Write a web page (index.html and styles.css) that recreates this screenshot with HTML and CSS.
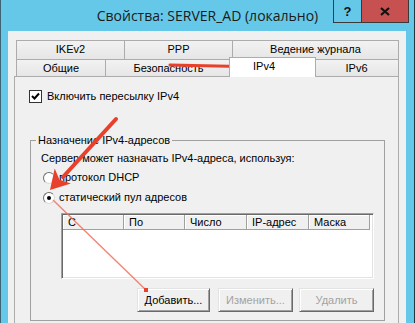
FILE: index.html
```html
<!DOCTYPE html>
<html lang="ru">
<head>
    <meta charset="UTF-8">
    <title>Свойства: SERVER_AD (локально)</title>
    <link rel="stylesheet" href="styles.css">
</head>
<body>
    <div class="screen">
        <div class="window">
            <div class="titlebar">
                <span></span>
                <div class="title">Свойства: SERVER_AD (локально)</div>
                <div class="caption-buttons">
                    <span class="cap-btn help">?</span>
                    <span class="cap-btn close">
                        <svg width="10" height="9" viewBox="0 0 10 9"><path d="M1 1 L9 8 M9 1 L1 8" stroke="#111" stroke-width="2.2" fill="none"/></svg>
                    </span>
                </div>
            </div>

            <div class="client">
                <div class="tabs">
                    <div class="tab-row row-top">
                        <div class="tab">IKEv2</div>
                        <div class="tab">PPP</div>
                        <div class="tab last">Ведение журнала</div>
                    </div>
                    <div class="tab-row row-bottom">
                        <div class="tab">Общие</div>
                        <div class="tab">Безопасность</div>
                        <div class="tab active">IPv4</div>
                        <div class="tab last">IPv6</div>
                    </div>
                </div>

                <div class="tab-page">
                    <label class="check-row">
                        <span class="checkbox">
                            <svg width="11" height="11" viewBox="0 0 11 11"><path d="M2 5 L4.5 7.5 L9 2.5" stroke="#000" stroke-width="2" fill="none"/></svg>
                        </span>
                        Включить пересылку IPv4
                    </label>

                    <fieldset class="group">
                        <legend>Назначение IPv4-адресов</legend>
                        <p class="hint">Сервер может назначать IPv4-адреса, используя:</p>
                        <label class="radio-row"><span class="radio"></span>протокол DHCP</label>
                        <label class="radio-row second"><span class="radio checked"></span>статический пул адресов</label>

                        <div class="listview">
                            <div class="lv-header">
                                <span class="col">С</span>
                                <span class="col">По</span>
                                <span class="col">Число</span>
                                <span class="col">IP-адрес</span>
                                <span class="col">Маска</span>
                            </div>
                        </div>

                        <div class="buttons">
                            <button class="btn btn-add">Добавить...</button>
                            <button class="btn btn-edit" disabled>Изменить...</button>
                            <button class="btn" disabled>Удалить</button>
                        </div>
                    </fieldset>
                </div>
            </div>
        </div>

        <svg class="annotations" width="415" height="323" viewBox="0 0 415 323">
            <!-- arrow to IPv4 tab -->
            <path d="M170 65 L240 66.5" stroke="#e8402a" stroke-width="3" fill="none" stroke-linecap="round"/>
            <polygon points="256,66.5 234,57.5 239,66.5 234,75.5" fill="#e8402a"/>
            <!-- arrow to static pool radio -->
            <path d="M116 119 L63 177" stroke="#e8402a" stroke-width="4" fill="none" stroke-linecap="round"/>
            <polygon points="50,190 54.7,168.6 59.5,179.7 70.9,183.4" fill="#e8402a"/>
            <!-- thin line to add button -->
            <path d="M53 200 L146 290" stroke="#f0705c" stroke-width="1.4" fill="none" opacity="0.85"/>
            <rect x="144" y="288" width="4" height="4" fill="#e8402a"/>
        </svg>
    </div>
</body>
</html>
```

FILE: styles.css
```css
* {
    box-sizing: border-box;
    margin: 0;
    padding: 0;
}

body {
    margin: 0;
    background: #ffffff;
    font-family: "Liberation Sans", Arial, sans-serif;
    font-size: 11px;
    color: #000;
}

.screen {
    position: relative;
    width: 415px;
    height: 323px;
    overflow: hidden;
}

.window {
    width: 415px;
    height: 323px;
    background: #66c8e8;
    border-left: 1px solid #3d6474;
    border-right: 1px solid #26343c;
    display: flex;
    flex-direction: column;
}

/* title bar */
.titlebar {
    height: 31px;
    flex: none;
    display: grid;
    grid-template-columns: 1fr auto 1fr;
}

.title {
    font-family: "Open Sans", "Noto Sans", sans-serif;
    font-size: 14px;
    line-height: 19px;
    padding-top: 6px;
    color: #1a1a1a;
    white-space: nowrap;
}

.caption-buttons {
    display: flex;
    justify-content: flex-end;
    align-items: flex-start;
    margin-right: 5px;
}

.cap-btn {
    height: 23px;
    display: flex;
    align-items: center;
    justify-content: center;
    border-bottom: 1px solid #3a3a3a;
    border-right: 1px solid #3a3a3a;
}

.help {
    width: 29px;
    border-left: 1px solid #3a3a3a;
    font-weight: bold;
    font-size: 13px;
    color: #111;
}

.close {
    width: 47px;
    background: #c75050;
}

/* client area */
.client {
    flex: 1;
    margin: 0 8px 0 7px;
    background: #f0f0f0;
    padding: 9px 7px 0 6px;
    display: flex;
    flex-direction: column;
}

.tabs {
    margin-left: 2px;
}

.tab-row {
    display: grid;
}

.row-top {
    grid-template-columns: 108px 108px 1fr;
    height: 19px;
}

.row-bottom {
    grid-template-columns: 89px 126px 83px 1fr;
    height: 17px;
}

.tab {
    border: 1px solid #acacac;
    border-right: none;
    border-bottom: none;
    background: linear-gradient(#f2f2f2, #e6e6e6);
    text-align: center;
    line-height: 17px;
    white-space: nowrap;
}

.row-bottom .tab {
    line-height: 16px;
}

.tab.last {
    border-right: 1px solid #acacac;
}

.tab.active {
    position: relative;
    z-index: 1;
    margin: -2px -2px -1px -2px;
    background: #ffffff;
    border-right: 1px solid #acacac;
    text-align: left;
    padding-left: 23px;
    line-height: 17px;
}

.tab-page {
    height: 260px;
    flex: none;
    border: 1px solid #acacac;
    background: #f0f0f0;
    padding: 13px 13px 0 14px;
}

.check-row {
    display: flex;
    align-items: center;
    gap: 5px;
    height: 13px;
    line-height: 13px;
}

.checkbox {
    width: 13px;
    height: 13px;
    border: 1px solid #333;
    background: #fff;
    display: flex;
    align-items: center;
    justify-content: center;
}

/* group box */
.group {
    margin: 31px 0 0 1px;
    width: 355px;
    border: 1px solid #a0a0a0;
    padding: 5px 10px 8px 10px;
}

.group legend {
    margin-left: -5px;
    padding: 0 2px;
    line-height: 13px;
}

.hint {
    line-height: 13px;
    margin-bottom: 6px;
}

.radio-row {
    display: flex;
    align-items: center;
    gap: 4px;
    height: 13px;
    line-height: 13px;
    padding-left: 2px;
    margin-bottom: 7px;
}

.radio-row.second {
    margin-bottom: 9px;
}

.radio {
    width: 12px;
    height: 12px;
    border-radius: 50%;
    border: 1px solid;
    border-color: #707070 #d8d8d8 #d8d8d8 #707070;
    background: #fff;
    display: flex;
    align-items: center;
    justify-content: center;
}

.radio.checked::after {
    content: "";
    width: 4px;
    height: 4px;
    border-radius: 50%;
    background: #000;
}

/* list view */
.listview {
    margin-left: 20px;
    height: 66px;
    background: #fff;
    border: 1px solid;
    border-color: #a0a0a0 #ffffff #ffffff #a0a0a0;
    box-shadow: inset 1px 1px #696969, inset -1px -1px #e3e3e3;
    padding: 1px;
}

.lv-header {
    display: grid;
    grid-template-columns: 61px 61px 62px 62px 61px;
    height: 15px;
}

.col {
    background: #f0f0f0;
    border-right: 1px solid #a0a0a0;
    border-bottom: 1px solid #a0a0a0;
    box-shadow: inset 1px 1px #ffffff;
    padding-left: 5px;
    line-height: 14px;
    white-space: nowrap;
}

/* buttons */
.buttons {
    display: flex;
    justify-content: flex-end;
    margin-top: 9px;
}

.btn {
    height: 24px;
    width: 75px;
    font-family: "Liberation Sans", Arial, sans-serif;
    font-size: 11px;
    color: #000;
    background: #f0f0f0;
    border: 1px solid;
    border-color: #e3e3e3 #696969 #696969 #e3e3e3;
    box-shadow: inset 1px 1px #ffffff, inset -1px -1px #a0a0a0;
}

.btn:disabled {
    color: #a3a3a3;
}

.btn-add {
    width: 73px;
    margin-right: 8px;
}

.btn-edit {
    margin-right: 6px;
}

.annotations {
    position: absolute;
    top: 0;
    left: 0;
    pointer-events: none;
}
```
